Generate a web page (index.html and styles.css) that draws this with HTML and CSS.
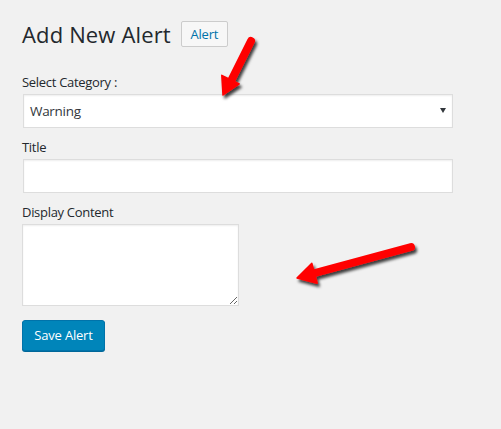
FILE: index.html
```html
<!DOCTYPE html>
<html>
<head>
<meta charset="utf-8">
<link rel="stylesheet" href="styles.css">
</head>
<body>
<div class="wrap">
  <div class="head">
    <h1 class="title">Add New Alert</h1>
    <a class="page-action">Alert</a>
  </div>
  <form class="form">
    <label class="lbl lbl-first">Select Category :</label>
    <div class="select">
      <span class="select-val">Warning</span>
      <span class="select-arrow"></span>
    </div>
    <label class="lbl">Title</label>
    <input class="text" type="text">
    <label class="lbl">Display Content</label>
    <textarea class="area"></textarea>
    <div class="actions"><button class="primary" type="button">Save Alert</button></div>
  </form>
  <svg class="arrows" width="501" height="429" viewBox="0 0 501 429">
    <defs>
      <filter id="sh" x="-20%" y="-20%" width="140%" height="140%">
        <feDropShadow dx="2" dy="3" stdDeviation="1.6" flood-color="#000" flood-opacity="0.75"/>
      </filter>
    </defs>
    <g filter="url(#sh)" fill="#ff0000" stroke="#ff0000">
      <line x1="251" y1="41" x2="231" y2="81" stroke-width="8" stroke-linecap="round"/>
      <polygon points="223,95 221.8,75.3 239.2,83.9" stroke-width="1.5" stroke-linejoin="round"/>
      <line x1="411" y1="247" x2="313" y2="273.5" stroke-width="8" stroke-linecap="round"/>
      <polygon points="297,278 311.8,263.3 317.2,283.3" stroke-width="1.5" stroke-linejoin="round"/>
    </g>
  </svg>
</div>
</body>
</html>
```
FILE: styles.css
```css
html, body {
  margin: 0;
  padding: 0;
  background: #f1f1f1;
}
body {
  font-family: "Open Sans", "Noto Sans", sans-serif;
  color: #23282d;
  width: 501px;
  height: 429px;
  overflow: hidden;
}
.wrap {
  position: relative;
  padding: 21px 0 0 22px;
  height: 429px;
  box-sizing: border-box;
}
.head {
  display: flex;
  align-items: center;
  gap: 10px;
  height: 26px;
}
.title {
  margin: 0;
  font-size: 22px;
  font-weight: 400;
  letter-spacing: 0.15px;
  line-height: 26px;
  color: #23282d;
}
.page-action {
  display: inline-block;
  box-sizing: border-box;
  width: 47px;
  height: 26px;
  padding: 0;
  text-align: center;
  border: 1px solid #ccc;
  border-radius: 2px;
  background: #f7f7f7;
  color: #0073aa;
  font-size: 13px;
  letter-spacing: -0.2px;
  line-height: 24px;
}
.form {
  display: flex;
  flex-direction: column;
  align-items: flex-start;
}
.lbl {
  font-size: 13px;
  letter-spacing: -0.3px;
  line-height: 19px;
  margin: 10px 0 2px;
}
.lbl-first {
  margin-top: 26px;
}
.select {
  box-sizing: border-box;
  width: 430px;
  height: 34px;
  margin-left: 1px;
  border: 1px solid #ddd;
  background: #fff;
  box-shadow: inset 0 1px 2px rgba(0,0,0,0.07);
  display: flex;
  align-items: center;
  justify-content: space-between;
  padding: 0 6px 0 6px;
  font-size: 13.5px;
  letter-spacing: -0.3px;
  color: #32373c;
}
.select-arrow {
  width: 0;
  height: 0;
  margin-top: -2px;
  border-left: 3px solid transparent;
  border-right: 3px solid transparent;
  border-top: 5px solid #32373c;
}
.text {
  box-sizing: border-box;
  width: 430px;
  height: 34px;
  margin: 0 0 0 1px;
  border: 1px solid #ddd;
  background: #fff;
  box-shadow: inset 0 1px 2px rgba(0,0,0,0.07);
  outline: none;
}
.area {
  box-sizing: border-box;
  width: 217px;
  height: 82px;
  margin: 0;
  border: 1px solid #ddd;
  background: #fff;
  box-shadow: inset 0 1px 2px rgba(0,0,0,0.07);
}
.actions {
  margin-top: 14px;
}
.primary {
  box-sizing: border-box;
  height: 31px;
  width: 83px;
  padding: 0 0 1px;
  border: 1px solid #0073aa;
  border-radius: 3px;
  background: #0085ba;
  box-shadow: 0 1px 0 #006799;
  color: #fff;
  font-family: "Open Sans", "Noto Sans", sans-serif;
  font-size: 13px;
  letter-spacing: -0.2px;
  line-height: 28px;
  white-space: nowrap;
}
.arrows {
  position: absolute;
  left: 0;
  top: 0;
  pointer-events: none;
}
```
